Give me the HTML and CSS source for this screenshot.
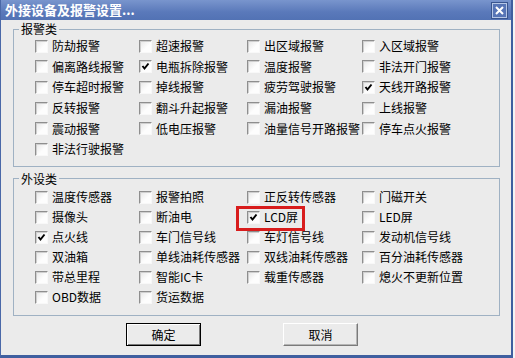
FILE: index.html
```html
<!DOCTYPE html>
<html lang="zh-CN">
<head>
  <meta charset="UTF-8" />
  <title>外接设备及报警设置</title>
  <link rel="stylesheet" href="styles.css">
</head>
<body>
  <div class="window">
    <div class="titlebar">
      <span class="title">外接设备及报警设置...</span>
      <span class="close">
        <svg width="9" height="9" viewBox="0 0 9 9"><path d="M1 1L8 8M8 1L1 8" stroke="#fff" stroke-width="2"/></svg>
      </span>
    </div>

    <div class="content">
      <fieldset class="group alarm">
        <legend>报警类</legend>
        <div class="grid">
          <label class="item"><span class="box"></span>防劫报警</label>
          <label class="item"><span class="box"></span>超速报警</label>
          <label class="item"><span class="box"></span>出区域报警</label>
          <label class="item"><span class="box"></span>入区域报警</label>

          <label class="item"><span class="box"></span>偏离路线报警</label>
          <label class="item"><span class="box checked"></span>电瓶拆除报警</label>
          <label class="item"><span class="box"></span>温度报警</label>
          <label class="item"><span class="box"></span>非法开门报警</label>

          <label class="item"><span class="box"></span>停车超时报警</label>
          <label class="item"><span class="box"></span>掉线报警</label>
          <label class="item"><span class="box"></span>疲劳驾驶报警</label>
          <label class="item"><span class="box checked"></span>天线开路报警</label>

          <label class="item"><span class="box"></span>反转报警</label>
          <label class="item"><span class="box"></span>翻斗升起报警</label>
          <label class="item"><span class="box"></span>漏油报警</label>
          <label class="item"><span class="box"></span>上线报警</label>

          <label class="item"><span class="box"></span>震动报警</label>
          <label class="item"><span class="box"></span>低电压报警</label>
          <label class="item"><span class="box"></span>油量信号开路报警</label>
          <label class="item"><span class="box"></span>停车点火报警</label>

          <label class="item"><span class="box"></span>非法行驶报警</label>
        </div>
      </fieldset>

      <fieldset class="group device">
        <legend>外设类</legend>
        <div class="grid">
          <label class="item"><span class="box"></span>温度传感器</label>
          <label class="item"><span class="box"></span>报警拍照</label>
          <label class="item"><span class="box"></span>正反转传感器</label>
          <label class="item"><span class="box"></span>门磁开关</label>

          <label class="item"><span class="box"></span>摄像头</label>
          <label class="item"><span class="box"></span>断油电</label>
          <label class="item marked"><span class="box checked"></span>LCD屏<span class="highlight"></span></label>
          <label class="item"><span class="box"></span>LED屏</label>

          <label class="item"><span class="box checked"></span>点火线</label>
          <label class="item"><span class="box"></span>车门信号线</label>
          <label class="item"><span class="box"></span>车灯信号线</label>
          <label class="item"><span class="box"></span>发动机信号线</label>

          <label class="item"><span class="box"></span>双油箱</label>
          <label class="item"><span class="box"></span>单线油耗传感器</label>
          <label class="item"><span class="box"></span>双线油耗传感器</label>
          <label class="item"><span class="box"></span>百分油耗传感器</label>

          <label class="item"><span class="box"></span>带总里程</label>
          <label class="item"><span class="box"></span>智能IC卡</label>
          <label class="item"><span class="box"></span>载重传感器</label>
          <label class="item"><span class="box"></span>熄火不更新位置</label>

          <label class="item"><span class="box"></span>OBD数据</label>
          <label class="item"><span class="box"></span>货运数据</label>
        </div>
      </fieldset>

      <div class="actions">
        <button class="btn default">确定</button>
        <button class="btn">取消</button>
      </div>
    </div>
  </div>
</body>
</html>
```

FILE: styles.css
```css
body {
  margin: 0;
  background: #f4f4f4;
  font-family: "Noto Sans CJK SC", "Liberation Sans", sans-serif;
  font-size: 12px;
  color: #000;
}
.window {
  width: 513px;
  height: 358px;
  box-sizing: border-box;
  background: #ebebeb;
  border-left: 1px solid #4a68a8;
  border-right: 2px solid #3f5f9f;
  border-bottom: 3px solid #3f5f9f;
}
.titlebar {
  height: 20px;
  display: flex;
  align-items: center;
  justify-content: space-between;
  padding: 0 4px 0 4px;
  background: linear-gradient(#7995cd, #5a79ba 60%, #5272b4);
}
.title {
  color: #fff;
  font-weight: bold;
  font-size: 13px;
  line-height: 20px;
  letter-spacing: 0;
}
.close {
  width: 15px;
  height: 15px;
  box-sizing: border-box;
  display: flex;
  align-items: center;
  justify-content: center;
  background: #5775b6;
  border: 1px solid #b6c7e6;
  outline: 1px solid #39558f;
  margin-top: 1px;
}
.content {
  padding: 2px 0 0 12px;
}
.group {
  width: 487px;
  box-sizing: border-box;
  margin: 0;
  padding: 0 0 6px 21px;
  border: 1px solid #9fb1c3;
  min-inline-size: 0;
}
.group legend {
  margin-left: -16px;
  padding: 0 2px;
  line-height: 14px;
  font-size: 12px;
}
.grid {
  display: grid;
  grid-template-columns: 104px 108px 115px 1fr;
  grid-auto-rows: 20.6px;
}
.device {
  margin-top: 5px;
  padding-bottom: 8px;
}
.device .grid {
  padding-top: 1.5px;
  grid-auto-rows: 20px;
}
.item {
  position: relative;
  display: flex;
  align-items: center;
  gap: 4px;
  white-space: nowrap;
  line-height: 14px;
}
.box {
  width: 13px;
  height: 13px;
  flex: none;
  box-sizing: border-box;
  border: 1px solid;
  border-color: #8e8e8e #f8f8f8 #f8f8f8 #8e8e8e;
  box-shadow: inset 1px 1px 0 #cfcfcf;
  background: linear-gradient(135deg, #e6e6e6, #fdfdfd 60%);
}
.box.checked {
  background-image: url("data:image/svg+xml,%3Csvg xmlns='http://www.w3.org/2000/svg' width='11' height='11'%3E%3Cpath d='M2.5 5 L4.5 7.5 L8.5 2.5' fill='none' stroke='%23000' stroke-width='2'/%3E%3C/svg%3E"), linear-gradient(135deg, #e6e6e6, #fdfdfd 60%);
  background-repeat: no-repeat;
}
.highlight {
  position: absolute;
  left: -11px;
  top: -1px;
  width: 69px;
  height: 25px;
  box-sizing: border-box;
  border: 3px solid #d81c1c;
}
.actions {
  display: flex;
  gap: 82px;
  margin-top: 7px;
  padding-left: 113px;
}
.btn {
  width: 75px;
  height: 23px;
  box-sizing: border-box;
  font-family: inherit;
  font-size: 12px;
  background: #ebebeb;
  border: 1px solid;
  border-color: #fff #7a7a7a #7a7a7a #fff;
  box-shadow: inset -1px -1px 0 #b5b5b5;
  padding: 0;
}
.btn.default {
  border: 1px solid #000;
  box-shadow: inset 1px 1px 0 #fff, inset -1px -1px 0 #7a7a7a;
}
```
